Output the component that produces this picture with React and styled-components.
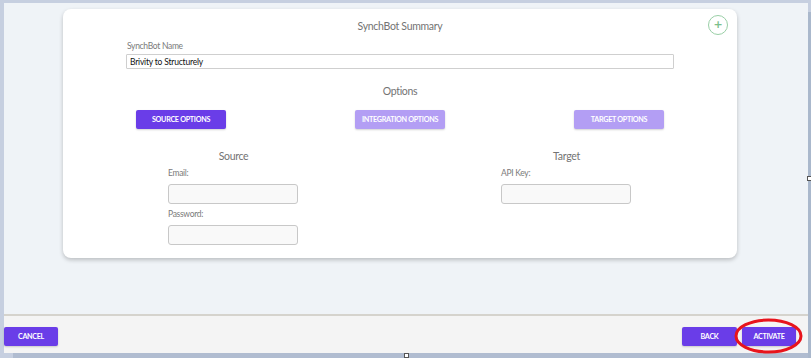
import React, { useState } from 'react';
import styled, { createGlobalStyle } from 'styled-components';

const GlobalStyle = createGlobalStyle`
  html, body {
    margin: 0;
    padding: 0;
    background: #c6cfe0;
    font-family: Lato, "Open Sans", sans-serif;
  }
  * { box-sizing: border-box; }
`;

const Frame = styled.div`
  position: relative;
  display: flex;
  width: 811px;
  height: 358px;
  padding: 3px 0 0 4px;
  overflow: hidden;
`;

const Workspace = styled.div`
  flex: 1;
  display: flex;
  flex-direction: column;
`;

const RightEdge = styled.div`
  width: 3px;
  margin-top: 9px;
  background: #aab8cc;
`;

const Main = styled.div`
  height: 311px;
  background: #eff3f7;
  padding: 6px 0 0 59px;
`;

const Divider = styled.div`
  height: 2px;
  background: #d5d3cd;
`;

const Footer = styled.div`
  position: relative;
  height: 37px;
  background: #f4f4f4;
  display: flex;
  align-items: flex-start;
  padding: 11px 12px 0 0;
  gap: 5px;
`;

const BottomBand = styled.div`
  flex: 1;
  margin-left: 9px;
  background: #b0bcd0;
`;

const Card = styled.div`
  position: relative;
  width: 674px;
  height: 249px;
  background: #fff;
  border-radius: 8px;
  box-shadow: 0 2px 4px rgba(0, 0, 0, 0.22);
  padding: 10px 0 0;
`;

const Heading = styled.div`
  text-align: center;
  font-size: 10.5px;
  line-height: 14px;
  letter-spacing: -0.3px;
  color: #737373;
  margin-top: ${({ $mt }) => $mt || 0}px;
`;

const NameBlock = styled.div`
  margin: 8px 63px 0 63px;
`;

const Label = styled.div`
  font-size: 8.5px;
  line-height: 11px;
  letter-spacing: -0.3px;
  color: #7a7a7a;
  padding-left: ${({ $pl }) => $pl || 0}px;
`;

const NameInput = styled.input`
  display: block;
  width: 100%;
  height: 15px;
  margin-top: 2px;
  border: 1px solid #cfcfcf;
  border-radius: 1px;
  padding: 0 3px;
  font-family: Lato, sans-serif;
  font-size: 8.5px;
  letter-spacing: -0.2px;
  color: #111;
  outline: none;
`;

const OptionRow = styled.div`
  display: flex;
  justify-content: space-between;
  padding: 0 73px;
  margin-top: 12px;
`;

const PurpleButton = styled.button`
  display: block;
  width: ${({ $w }) => $w || 90}px;
  height: 19px;
  border: none;
  border-radius: 2px;
  background: ${({ $muted }) => ($muted ? '#b39ef4' : '#6a3de8')};
  box-shadow: 0 1px 2px rgba(0, 0, 0, 0.18);
  color: #fff;
  font-family: Lato, sans-serif;
  font-weight: 700;
  font-size: 7.2px;
  letter-spacing: -0.3px;
  text-transform: uppercase;
  padding: 0;
  cursor: pointer;
`;

const Columns = styled.div`
  display: grid;
  grid-template-columns: 1fr 1fr;
  padding: 0 4px;
  margin-top: 20px;
`;

const Column = styled.div`
  display: flex;
  flex-direction: column;
`;

const FieldBlock = styled.div`
  width: 130px;
  margin: 5px 0 0 101px;
`;

const SmallInput = styled.input`
  display: block;
  width: 130px;
  height: 20px;
  border: 1px solid #c8c8c8;
  border-radius: 3px;
  background: #f9f9f9;
  margin-top: 5px;
  margin-bottom: ${({ $mb }) => $mb || 0}px;
  outline: none;
`;

const PlusButton = styled.button`
  position: absolute;
  top: 6px;
  left: 645px;
  width: 20px;
  height: 20px;
  border-radius: 50%;
  border: 1px solid #99cfa6;
  background: #fff;
  color: #7cbf8c;
  font-size: 11px;
  font-weight: 700;
  line-height: 16px;
  padding: 0;
  font-family: "DejaVu Sans", sans-serif;
`;

const Spacer = styled.div`
  flex: 1;
`;

const ActivateWrap = styled.div`
  position: relative;
  display: flex;
`;

const Ring = styled.svg`
  position: absolute;
  left: -8px;
  top: -9px;
  width: 69px;
  height: 36px;
  pointer-events: none;
`;

const Handle = styled.div`
  position: absolute;
  width: 5px;
  height: 5px;
  background: #fff;
  border: 1px solid #555;
`;

export default function App() {
  const [name, setName] = useState('Brivity to Structurely');
  const [tab, setTab] = useState('source');

  return (
    <>
      <GlobalStyle />
      <Frame>
        <Workspace>
          <Main>
            <Card>
              <PlusButton>+</PlusButton>
              <Heading>SynchBot Summary</Heading>
              <NameBlock>
                <Label $pl={1}>SynchBot Name</Label>
                <NameInput value={name} onChange={(e) => setName(e.target.value)} />
              </NameBlock>
              <Heading $mt={15}>Options</Heading>
              <OptionRow>
                <PurpleButton $muted={tab !== 'source'} onClick={() => setTab('source')}>Source Options</PurpleButton>
                <PurpleButton $muted={tab !== 'integration'} onClick={() => setTab('integration')}>Integration Options</PurpleButton>
                <PurpleButton $muted={tab !== 'target'} onClick={() => setTab('target')}>Target Options</PurpleButton>
              </OptionRow>
              <Columns>
                <Column>
                  <Heading>Source</Heading>
                  <FieldBlock>
                    <Label>Email:</Label>
                    <SmallInput $mb={5} />
                    <Label>Password:</Label>
                    <SmallInput />
                  </FieldBlock>
                </Column>
                <Column>
                  <Heading>Target</Heading>
                  <FieldBlock>
                    <Label>API Key:</Label>
                    <SmallInput />
                  </FieldBlock>
                </Column>
              </Columns>
            </Card>
          </Main>
          <Divider />
          <Footer>
            <PurpleButton $w={54}>Cancel</PurpleButton>
            <Spacer />
            <PurpleButton $w={55}>Back</PurpleButton>
            <ActivateWrap>
              <PurpleButton $w={54}>Activate</PurpleButton>
              <Ring viewBox="0 0 69 36">
                <ellipse cx="34.5" cy="18" rx="32.5" ry="16" fill="none" stroke="#e8141c" strokeWidth="3" />
              </Ring>
            </ActivateWrap>
          </Footer>
          <BottomBand />
        </Workspace>
        <RightEdge />
        <Handle style={{ left: 807, top: 176 }} />
        <Handle style={{ left: 404, top: 353 }} />
      </Frame>
    </>
  );
}
